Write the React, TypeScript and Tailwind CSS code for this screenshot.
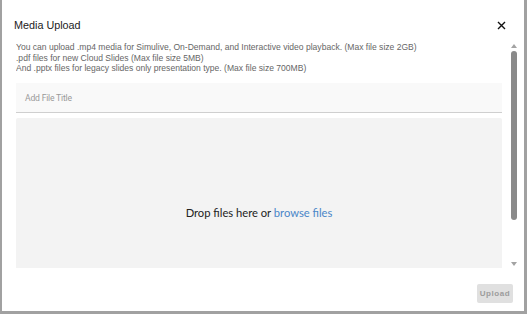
import React from 'react';

const Scrollbar: React.FC = () => (
  <div className="w-[9px] flex flex-col items-center pt-[3px] pb-[2px]">
    <svg width="6" height="4" viewBox="0 0 6 4" className="shrink-0">
      <path d="M0 4 L3 0 L6 4 Z" fill="#a3a3a3" />
    </svg>
    <div className="mt-[3px] h-[169px] w-[6px] rounded-full bg-[#8a8a8a]" />
    <div className="flex-1" />
    <svg width="6" height="4" viewBox="0 0 6 4" className="shrink-0">
      <path d="M0 0 L6 0 L3 4 Z" fill="#a3a3a3" />
    </svg>
  </div>
);

export default function App() {
  return (
    <div className="w-[527px] h-[314px] bg-[#a1a1a1] pl-[2px] pr-[3px] pb-[3px] overflow-hidden">
      <div className="h-full bg-white flex flex-col" style={{ fontFamily: '"Liberation Sans", Arial, sans-serif' }}>
        {/* header */}
        <div className="h-[41px] shrink-0 flex items-center justify-between pl-[12px] pr-[18px] pt-[10px]">
          <h2 className="text-[10.8px] text-[#222]">Media Upload</h2>
          <button className="text-[#111]">
            <svg width="9" height="9" viewBox="0 0 9 9">
              <path d="M1 1 L8 8 M8 1 L1 8" stroke="#111" strokeWidth="1.4" />
            </svg>
          </button>
        </div>

        {/* body */}
        <div className="h-[227px] shrink-0 flex pl-[14px] pr-[6px]">
          <div className="flex-1 overflow-hidden pr-[7px]">
            <p className="text-[8.55px] leading-[10.5px] text-[#666] pt-[1px]">
              You can upload .mp4 media for Simulive, On-Demand, and Interactive video playback. (Max file size 2GB)
              <br />
              .pdf files for new Cloud Slides (Max file size 5MB)
              <br />
              And .pptx files for legacy slides only presentation type. (Max file size 700MB)
            </p>
            <div className="mt-[9px] h-[30px] bg-[#f9f9f9] border-b border-[#cfcfcf] flex items-center px-[9px] pt-[2px]">
              <span className="text-[8.6px] text-[#9a9a9a] tracking-[-0.2px]" style={{ fontFamily: 'Roboto, sans-serif' }}>
                Add File Title
              </span>
            </div>
            <div className="mt-[5px] h-[192px] bg-[#f3f3f3] rounded-[2px] flex items-center justify-center">
              <span className="text-[11.2px] text-[#222]" style={{ fontFamily: 'Lato, sans-serif' }}>
                Drop files here or <span className="text-[#4a86c8]">browse files</span>
              </span>
            </div>
          </div>
          <Scrollbar />
        </div>

        {/* footer */}
        <div className="flex-1 flex items-start justify-end pr-[11px] pt-[16px]">
          <button className="h-[19px] w-[36px] rounded-[2px] bg-[#e0e0e0] text-[8px] font-bold tracking-[0.6px] text-[#9c9c9c]">
            Upload
          </button>
        </div>
      </div>
    </div>
  );
}
